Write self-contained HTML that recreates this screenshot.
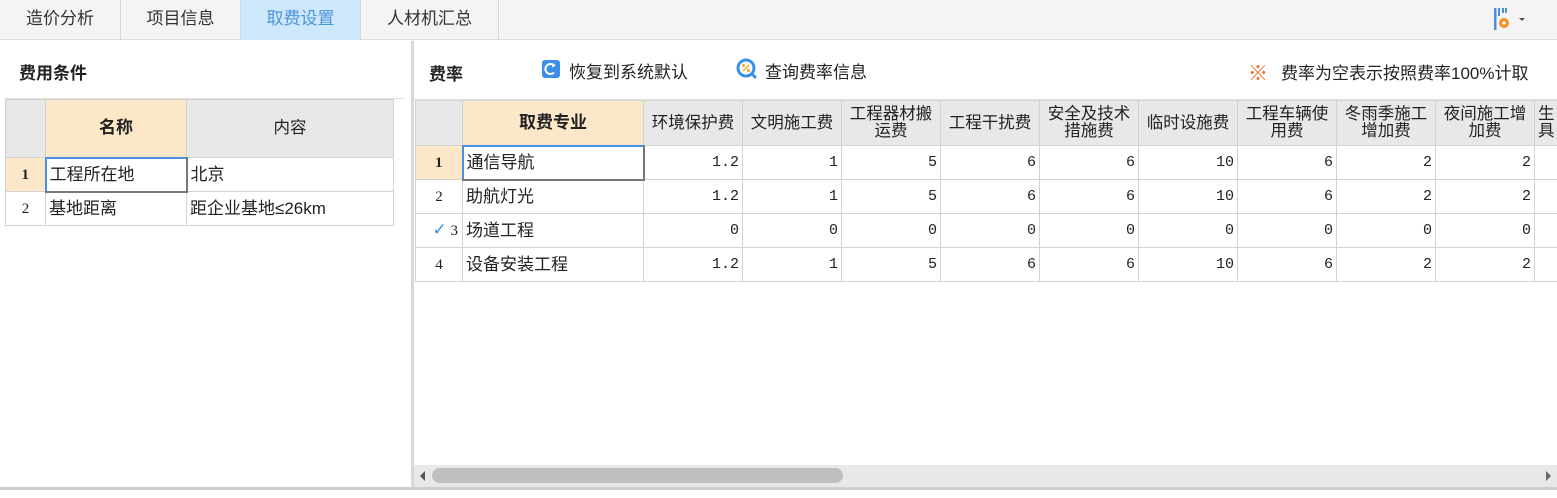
<!DOCTYPE html>
<html><head><meta charset="utf-8"><style>
*{margin:0;padding:0;box-sizing:border-box}
body{width:1557px;height:498px;background:#fff;position:relative;overflow:hidden;font-family:"Liberation Sans","Noto Sans CJK SC",sans-serif;font-size:17px;color:#222}
.a{position:absolute}
.tab{position:absolute;top:0;height:40px;line-height:38px;text-align:center;border-right:1px solid #d6d6d6;font-size:17px;color:#333}
table{border-collapse:collapse;table-layout:fixed;position:absolute}
td{border:1px solid #d2d2d2;height:34px;padding:0 3px;white-space:nowrap;overflow:hidden;line-height:20px}
.h{background:#e8e8e8;text-align:center;line-height:17px;font-size:16.5px}
.o{background:#fde7c9;font-weight:bold;text-align:center}
.n{text-align:center;font-size:15px;font-family:"Liberation Serif","Noto Serif CJK SC",serif}
.r{text-align:right;font-family:"Liberation Mono",monospace;font-size:15px}
.hb{font-weight:bold;font-size:17px}
</style></head><body>
<div class="a" style="left:0;top:0;width:1557px;height:40px;background:#f4f4f4;border-bottom:1px solid #ddd"></div>
<div class="tab" style="left:0;width:121px">造价分析</div>
<div class="tab" style="left:121px;width:120px">项目信息</div>
<div class="tab" style="left:241px;width:120px;background:#cde7fb;color:#4b95dc">取费设置</div>
<div class="tab" style="left:361px;width:138px">人材机汇总</div>
<svg class="a" style="left:1492px;top:6px" width="40" height="26" viewBox="0 0 40 26"><rect x="2" y="2" width="2.5" height="22" fill="#4a90e2"/><rect x="6" y="2" width="2" height="8" fill="#4a90e2"/><rect x="10" y="2" width="2" height="5" fill="#4a90e2"/><rect x="13" y="2" width="2" height="5" fill="#4a90e2"/><circle cx="12" cy="17" r="5" fill="#f5901e"/><circle cx="12" cy="17" r="1.8" fill="#fff"/><path d="M27 12h6l-3 3z" fill="#555"/></svg>

<!-- left panel -->
<div class="a" style="left:411px;top:41px;width:3px;height:449px;background:#d8d8d8"></div>
<div class="a hb" style="left:19px;top:59px">费用条件</div>
<div class="a" style="left:5px;top:98px;width:400px;height:1px;background:#e2e2e2"></div>
<table style="left:5px;top:99px;width:388px">
<colgroup><col style="width:40px"><col style="width:141px"><col style="width:207px"></colgroup>
<tr style="height:58px"><td class="h" style="height:58px"></td><td class="o">名称</td><td class="h">内容</td></tr>
<tr><td class="n" style="background:#fde7c9;font-weight:bold">1</td><td style="border:2px solid #4a90e2;border-right-color:#777;border-bottom-color:#777">工程所在地</td><td>北京</td></tr>
<tr><td class="n">2</td><td>基地距离</td><td>距企业基地≤26km</td></tr>
</table>

<!-- right panel -->
<div class="a hb" style="left:429px;top:60px">费率</div>
<svg class="a" style="left:541px;top:59px" width="20" height="20"><rect x="1" y="1" width="18" height="18" rx="3" fill="#3b8fe6"/><path d="M13 6.5A5 5 0 1 0 13 13.5" stroke="#fff" stroke-width="2" fill="none"/><path d="M11 4l4 2.5-4 2z" fill="#fff"/></svg>
<div class="a" style="left:569px;top:58px">恢复到系统默认</div>
<svg class="a" style="left:736px;top:58px" width="24" height="24"><circle cx="10" cy="10" r="8" fill="#fff" stroke="#3b8fe6" stroke-width="3"/><path d="M15 15l5 5" stroke="#3b8fe6" stroke-width="3"/><circle cx="7.5" cy="7.5" r="1.5" fill="#f5a623"/><circle cx="12.5" cy="12.5" r="1.5" fill="#f5a623"/><path d="M13 7L7 13" stroke="#f5a623" stroke-width="1.5"/></svg>
<div class="a" style="left:765px;top:58px">查询费率信息</div>
<div class="a" style="left:1248px;top:57px;color:#f26522;font-size:20px">※</div>
<div class="a" style="left:1281px;top:59px;font-size:17px">费率为空表示按照费率100%计取</div>
<div class="a" style="left:414px;top:99px;width:1143px;height:1px;background:#e2e2e2"></div>
<table style="left:415px;top:100px;width:1160px">
<colgroup><col style="width:47px"><col style="width:181px"><col style="width:99px"><col style="width:99px"><col style="width:99px"><col style="width:99px"><col style="width:99px"><col style="width:99px"><col style="width:99px"><col style="width:99px"><col style="width:99px"><col style="width:41px"></colgroup>
<tr style="height:45px"><td class="h" style="height:45px"></td><td class="o">取费专业</td><td class="h">环境保护费</td><td class="h">文明施工费</td><td class="h">工程器材搬<br>运费</td><td class="h">工程干扰费</td><td class="h">安全及技术<br>措施费</td><td class="h">临时设施费</td><td class="h">工程车辆使<br>用费</td><td class="h">冬雨季施工<br>增加费</td><td class="h">夜间施工增<br>加费</td><td class="h" style="text-align:left">生<br>具</td></tr>
<tr><td class="n" style="background:#fde7c9;font-weight:bold">1</td><td style="border:2px solid #4a90e2;border-right-color:#777;border-bottom-color:#777">通信导航</td><td class="r">1.2</td><td class="r">1</td><td class="r">5</td><td class="r">6</td><td class="r">6</td><td class="r">10</td><td class="r">6</td><td class="r">2</td><td class="r">2</td><td></td></tr>
<tr><td class="n">2</td><td>助航灯光</td><td class="r">1.2</td><td class="r">1</td><td class="r">5</td><td class="r">6</td><td class="r">6</td><td class="r">10</td><td class="r">6</td><td class="r">2</td><td class="r">2</td><td></td></tr>
<tr><td class="n" style="text-align:right;padding-right:4px"><span style="color:#3b8fe6;font-size:17px;font-family:'DejaVu Sans'">✓</span> 3</td><td>场道工程</td><td class="r">0</td><td class="r">0</td><td class="r">0</td><td class="r">0</td><td class="r">0</td><td class="r">0</td><td class="r">0</td><td class="r">0</td><td class="r">0</td><td></td></tr>
<tr><td class="n">4</td><td>设备安装工程</td><td class="r">1.2</td><td class="r">1</td><td class="r">5</td><td class="r">6</td><td class="r">6</td><td class="r">10</td><td class="r">6</td><td class="r">2</td><td class="r">2</td><td></td></tr>
</table>
<!-- scrollbar -->
<div class="a" style="left:414px;top:465px;width:1143px;height:22px;background:#e8e8e8"></div>
<div class="a" style="left:432px;top:468px;width:411px;height:15px;background:#bfbfbf;border-radius:8px"></div>
<svg class="a" style="left:419px;top:470px" width="8" height="12"><path d="M6 1L1 6l5 5z" fill="#555"/></svg>
<svg class="a" style="left:1545px;top:470px" width="8" height="12"><path d="M1 1l5 5-5 5z" fill="#666"/></svg>
<div class="a" style="left:0;top:487px;width:1557px;height:3px;background:#cfcfcf"></div>
</body></html>
